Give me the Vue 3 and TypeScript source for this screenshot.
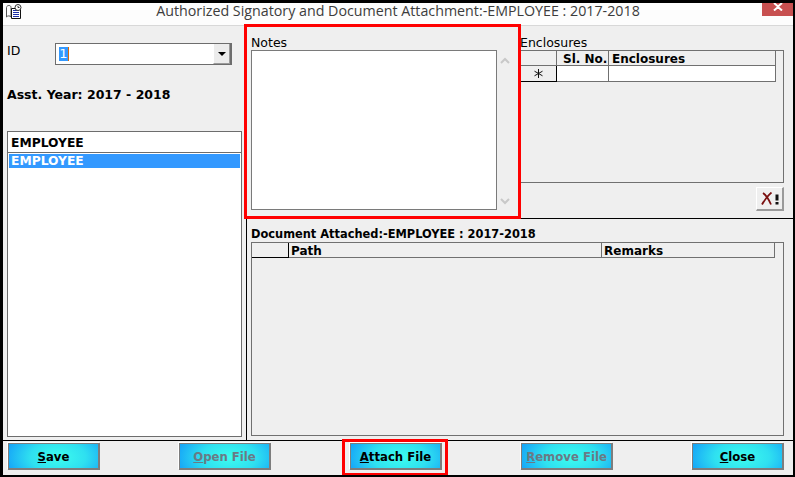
<script setup lang="ts">
interface FooterButton {
  key: string
  rest: string
  disabled: boolean
}

const buttons: FooterButton[] = [
  { key: 'S', rest: 'ave', disabled: false },
  { key: 'O', rest: 'pen File', disabled: true },
  { key: 'A', rest: 'ttach File', disabled: false },
  { key: 'R', rest: 'emove File', disabled: true },
  { key: 'C', rest: 'lose', disabled: false }
]
</script>

<template>
  <div class="window">
    <header class="titlebar">
      <div class="app-icon">
        <svg width="17" height="15" viewBox="0 0 17 15">
          <path d="M1.5 13V3.5C1.5 2 3 1.5 4 1.5S6 2 6 3.5V13C5 11.5 2.500 11.500 1.500 13Z" fill="#fff" stroke="#555" />
          <path d="M6.500 4.500H15.500V14.500H6.500Z" fill="#fff" stroke="#111" />
          <path d="M8 6.500H14M8 8.500H14M8 10.500H14M8 12.500H14" stroke="#1d2fa8" />
          <circle cx="13" cy="3.500" r="3" fill="#fff" stroke="#333" />
          <path d="M13 2V3.500H14.500" fill="none" stroke="#333" />
        </svg>
      </div>
      <div class="title">Authorized Signatory and Document Attachment:-EMPLOYEE : 2017-2018</div>
      <div class="close-x">
        <svg width="10" height="8" viewBox="0 0 10 8">
          <path d="M1 0L5 3.500L9 0M1 7.500L5 4L9 7.500" fill="none" stroke="#fff" stroke-width="2" />
        </svg>
      </div>
    </header>

    <main class="body">
      <aside class="left">
        <div class="id-row">
          <span class="id-label">ID</span>
          <div class="combo">
            <span class="combo-value"><span class="selected">1</span></span>
            <span class="combo-btn"><i class="arrow"></i></span>
          </div>
        </div>
        <div class="year">Asst. Year: 2017 - 2018</div>
        <div class="list">
          <div class="list-head">EMPLOYEE</div>
          <div class="list-item">EMPLOYEE</div>
        </div>
      </aside>

      <section class="right">
        <div class="top">
          <div class="notes">
            <div class="cap">Notes</div>
            <div class="notes-row">
              <div class="textarea"></div>
              <div class="scroll">
                <svg width="10" height="7" viewBox="0 0 10 7"><path d="M1 6L5 2L9 6" fill="none" stroke="#c8c8c8" stroke-width="2" /></svg>
                <svg width="10" height="7" viewBox="0 0 10 7"><path d="M1 1L5 5L9 1" fill="none" stroke="#c8c8c8" stroke-width="2" /></svg>
              </div>
            </div>
          </div>
          <div class="enclosures">
            <div class="cap">Enclosures</div>
            <div class="grid enc-grid">
              <div class="enc-table">
                <div class="cell head"></div>
                <div class="cell head sl">Sl. No.</div>
                <div class="cell head enc">Enclosures</div>
                <div class="cell indicator">
                  <svg width="9" height="9" viewBox="0 0 9 9">
                    <path d="M4.500 0V9M0.500 2.200L8.500 6.800M8.500 2.200L0.500 6.800" stroke="#111" stroke-width="1" />
                  </svg>
                </div>
                <div class="cell blank"></div>
                <div class="cell blank"></div>
              </div>
            </div>
            <button class="tool-btn" type="button" aria-label="Delete">
              <svg width="18" height="14" viewBox="0 0 18 14">
                <path d="M2 1C5 3 8 8 10 12.500M1 12.500C3 9 6 4 10.500 0.500" fill="none" stroke="#7a0f0f" stroke-width="1.800" />
                <path d="M14.500 2.500H17.500V8.500H14.500ZM14.500 10H17.500V12.500H14.500Z" fill="#111" />
              </svg>
            </button>
          </div>
        </div>

        <div class="bottom">
          <div class="doc-title">Document Attached:-EMPLOYEE : 2017-2018</div>
          <div class="grid doc-grid">
            <div class="doc-table">
              <div class="cell indicator-head"></div>
              <div class="cell head">Path</div>
              <div class="cell head">Remarks</div>
            </div>
          </div>
        </div>
      </section>
    </main>

    <footer class="footer">
      <button
        v-for="b in buttons"
        :key="b.key"
        type="button"
        class="action"
        :class="{ off: b.disabled }"
      ><u>{{ b.key }}</u>{{ b.rest }}</button>
    </footer>

    <div class="mark mark-notes"></div>
    <div class="mark mark-attach"></div>
  </div>
</template>

<style scoped>
.window {
  position: relative;
  box-sizing: border-box;
  width: 795px;
  height: 477px;
  display: flex;
  flex-direction: column;
  border-style: solid;
  border-color: #000;
  border-width: 3px 2px 2px 3px;
  background: #efefef;
  color: #000;
  font-family: "DejaVu Sans", Verdana, sans-serif;
  font-size: 11px;
  overflow: hidden;
}
.titlebar {
  flex: none;
  box-sizing: border-box;
  height: 23px;
  display: flex;
  align-items: flex-start;
  background: #fdfdfd;
  border-bottom: 1px solid #d8d8d8;
}
.app-icon {
  width: 31px;
  flex: none;
  padding: 1px 0 0 2px;
  box-sizing: border-box;
}
.app-icon svg,
.close-x svg {
  display: block;
}
.title {
  flex: 1;
  text-align: center;
  font-family: "Open Sans", "Noto Sans", sans-serif;
  font-size: 14.250px;
  line-height: 15px;
  color: #3c3c3c;
  white-space: nowrap;
}
.close-x {
  width: 31px;
  height: 13px;
  flex: none;
  background: #c75050;
  display: flex;
  justify-content: center;
}
.body {
  flex: 1;
  min-height: 0;
  display: flex;
}
.left {
  flex: none;
  box-sizing: border-box;
  width: 243px;
  padding: 17px 4px 3px 4px;
  display: flex;
  flex-direction: column;
}
.id-row {
  display: flex;
  align-items: flex-start;
  height: 22px;
}
.id-label {
  width: 48px;
  line-height: 14px;
  padding-top: 1px;
  font-size: 12.500px;
}
.combo {
  box-sizing: border-box;
  width: 177px;
  height: 22px;
  display: flex;
  background: #fff;
  border: 1px solid #6d6d6d;
  border-right-width: 2px;
}
.combo-value {
  flex: 1;
  padding: 3px 0 0 3px;
}
.selected {
  display: inline-block;
  width: 9px;
  height: 14px;
  line-height: 14px;
  text-align: center;
  background: #3399ff;
  color: #fff;
  font-size: 13px;
  border-right: 1px solid #d8690a;
}
.combo-btn {
  box-sizing: border-box;
  width: 17px;
  background: #ececec;
  border-left: 1px solid #fff;
  border-bottom: 1px solid #9b9b9b;
  border-right: 1px solid #9b9b9b;
  display: flex;
  align-items: center;
  justify-content: center;
}
.arrow {
  width: 0;
  height: 0;
  border: 4px solid transparent;
  border-top: 4px solid #000;
  border-bottom: 0;
}
.year {
  margin-top: 22px;
  font-weight: 700;
  line-height: 16px;
  font-size: 12.500px;
  white-space: nowrap;
}
.list {
  margin-top: 28px;
  flex: 1;
  background: #fff;
  border: 1px solid #6d6d6d;
  box-sizing: border-box;
  width: 235px;
}
.list-head {
  height: 20px;
  line-height: 22px;
  padding-left: 3px;
  font-weight: 700;
  font-size: 12.300px;
  border-bottom: 1px solid #6d6d6d;
}
.list-item {
  margin: 1px 1px 0;
  height: 14px;
  line-height: 15px;
  padding-left: 2px;
  background: #3399ff;
  color: #fff;
  font-weight: 700;
  font-size: 12.300px;
}
.right {
  flex: 1;
  min-width: 0;
  display: flex;
  flex-direction: column;
  border-left: 1px solid #000;
}
.top {
  flex: none;
  box-sizing: border-box;
  height: 193px;
  display: flex;
  padding: 10px 9px 0 4px;
  border-bottom: 1px solid #000;
}
.cap {
  height: 14px;
  line-height: 14px;
  font-size: 12.500px;
  white-space: nowrap;
}
.notes {
  width: 269px;
  flex: none;
}
.notes-row {
  display: flex;
}
.textarea {
  box-sizing: border-box;
  width: 246px;
  height: 160px;
  background: #fff;
  border: 1px solid #7a7a7a;
}
.scroll {
  width: 16px;
  height: 160px;
  box-sizing: border-box;
  padding: 7px 0 5px;
  display: flex;
  flex-direction: column;
  justify-content: space-between;
  align-items: center;
}
.scroll svg {
  display: block;
}
.enclosures {
  flex: 1;
  min-width: 0;
  display: flex;
  flex-direction: column;
}
.grid {
  box-sizing: border-box;
  border: 1px solid #707070;
  background: #efefef;
}
.enc-grid {
  height: 133px;
}
.enc-table {
  display: grid;
  grid-template-columns: 36px 52px 167px;
  grid-template-rows: 15px 16px;
  width: 255px;
}
.cell {
  box-sizing: border-box;
  min-width: 0;
}
.head {
  line-height: 16px;
  padding-left: 2px;
  font-weight: 700;
  font-size: 12px;
  white-space: nowrap;
  border-right: 1px solid #707070;
  border-bottom: 1px solid #707070;
}
.head.sl {
  padding-left: 6px;
}
.head.enc {
  padding-left: 3px;
}
.indicator {
  display: flex;
  align-items: center;
  justify-content: center;
  border-right: 1px solid #000;
  border-bottom: 1px solid #000;
}
.indicator svg {
  display: block;
}
.blank {
  background: #fff;
  border-right: 1px solid #707070;
  border-bottom: 1px solid #707070;
}
.tool-btn {
  align-self: flex-end;
  margin-top: 4px;
  box-sizing: border-box;
  width: 28px;
  height: 24px;
  padding: 0;
  display: flex;
  align-items: center;
  justify-content: center;
  background: #efefef;
  border: 1px solid;
  border-color: #fff #9a9a9a #9a9a9a #fff;
  border-width: 1px 2px 2px 1px;
}
.bottom {
  flex: 1;
  min-height: 0;
  display: flex;
  flex-direction: column;
  padding: 8px 9px 4px 4px;
}
.doc-title {
  height: 15px;
  line-height: 14px;
  font-weight: 700;
  font-size: 11.400px;
  white-space: nowrap;
}
.doc-grid {
  flex: 1;
  min-height: 0;
}
.doc-table {
  display: grid;
  grid-template-columns: 37px 313px 173px;
  grid-template-rows: 15px;
  width: 523px;
}
.indicator-head {
  border-right: 1px solid #000;
  border-bottom: 1px solid #000;
}
.footer {
  flex: none;
  box-sizing: border-box;
  height: 35px;
  border-top: 1px solid #000;
  padding: 2px 9px 0 5px;
  display: flex;
  justify-content: space-between;
  align-items: flex-start;
}
.action {
  box-sizing: border-box;
  width: 92px;
  height: 27px;
  padding: 2px 0 0;
  font-family: "DejaVu Sans", Verdana, sans-serif;
  font-size: 11.700px;
  font-weight: 700;
  color: #000;
  background: radial-gradient(ellipse 62% 130% at 55% 55%, #3dfdee 0%, #2fe0f0 50%, #14a0f8 100%);
  border-style: solid;
  border-width: 1px 2px 2px 1px;
  border-color: #7d7d7d;
  box-shadow: -1px -1px 0 #fff;
}
.action.off {
  color: #6a7a86;
}
.mark {
  position: absolute;
  box-sizing: border-box;
  border: 3px solid #ff0000;
  pointer-events: none;
}
.mark-notes {
  left: 241px;
  top: 21px;
  width: 277px;
  height: 195px;
}
.mark-attach {
  left: 339px;
  top: 436px;
  width: 106px;
  height: 37px;
}
</style>

<style>
html, body {
  margin: 0;
  padding: 0;
  background: #000;
}
</style>
